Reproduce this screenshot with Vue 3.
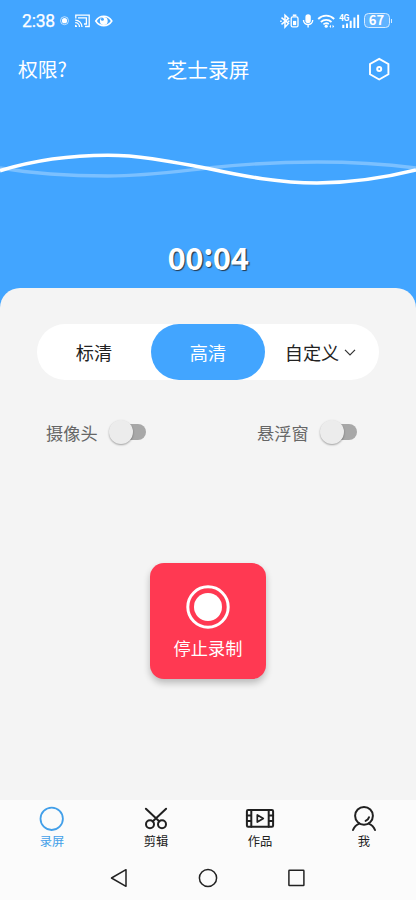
<script setup>
import { ref } from 'vue'

const qualities = ['标清', '高清', '自定义']
const quality = ref('高清')
const tab = ref('录屏')
const tabs = ['录屏', '剪辑', '作品', '我']
const switches = ref([
  { label: '摄像头', on: false },
  { label: '悬浮窗', on: false },
])
</script>

<template>
  <div class="screen">
    <div class="status">
      <span class="clock">2:38</span>
      <svg class="status-left" width="54" height="18" viewBox="0 0 54 18" fill="none" stroke="#fff">
        <circle cx="5.5" cy="8.7" r="4" stroke-width="1" opacity=".65" />
        <circle cx="5.5" cy="8.7" r="2.6" fill="#fff" stroke="none" />
        <path d="M16.8 6.5V3.2h13.4v11.3H26M19 5.8h8.4v6.2H25" stroke-width="1.3" />
        <path d="M16.2 8.1a6.8 6.8 0 0 1 6.8 6.8M16.2 10.6a4.3 4.3 0 0 1 4.3 4.3" stroke-width="1.3" />
        <path d="M16 12.7a2.2 2.2 0 0 1 2.2 2.2H16z" fill="#fff" stroke="none" />
        <path d="M36.8 9c4-6.3 12-6.3 16 0c-4 6.3-12 6.3-16 0z" stroke-width="1.6" />
        <circle cx="44.8" cy="9" r="3.9" fill="#fff" stroke="none" />
        <circle cx="43.4" cy="7.2" r="1.5" fill="#42a5ff" stroke="none" />
      </svg>
      <span class="grow"></span>
      <svg class="status-right" width="82" height="18" viewBox="0 0 82 18" fill="none" stroke="#fff" stroke-width="1.5">
        <path d="M1.5 5.6l7 5.8L5 15.2V3.2l3.5 3.2-7 6" stroke-width="1.5" />
        <path d="M.2 9.2h1.5M7.8 9.2h1.7" />
        <rect x="11.2" y="4.9" width="6.8" height="10" rx="1.5" stroke-width="1.3" />
        <path d="M12.8 3.2h3.6" />
        <rect x="13" y="8.9" width="3.2" height="4.2" fill="#fff" stroke="none" />
        <rect x="25.4" y="2.3" width="5.4" height="8.8" rx="2.7" fill="#fff" stroke="none" />
        <path d="M23.5 8c0 6 9.2 6 9.2 0M28.1 12.5v3" stroke-width="1.4" />
        <path d="M38.2 7c4.4-4.4 11.6-4.4 16 0M40.9 10c3-2.9 7.6-2.9 10.6 0M43.4 12.4c1.7-1.5 3.8-1.5 5.4-.4" stroke-width="1.8" />
        <circle cx="46.2" cy="14.2" r="1.6" fill="#fff" stroke="none" />
        <path d="M51 12.8l-1.6 1.6 1.6 1.5zM52.6 12.8l1.6 1.6-1.6 1.5z" fill="#fff" stroke="none" />
        <path d="M63.3 16v-3.2M67 16v-4.5M70.7 16V8.8M74.4 16V5.5M78.1 16V2.7" stroke-width="2" />
        <text x="59" y="9.2" class="network">4G</text>
      </svg>
      <span class="battery">67</span>
      <span class="battery-tip"></span>
    </div>

    <header class="header">
      <span>权限?</span>
      <span class="title">芝士录屏</span>
      <svg class="settings" width="22" height="24" viewBox="0 0 22 24" fill="none" stroke="#fff" stroke-width="1.9">
        <path d="M11.2 1.8l9.2 5.2v10.3l-9.2 5.2L2 17.3V7z" />
        <circle cx="11.2" cy="12" r="2" stroke-width="2" />
      </svg>
    </header>

    <svg class="wave" width="416" height="44" viewBox="0 0 416 44" fill="none">
      <path d="M0 18C35 24 73 26 108 26C145 26 180 21 208 18C245 14 280 12 317 12C352 12 384 14 416 18" stroke="#7bc0ff" stroke-width="3.4" />
      <path d="M0 20.7C35 10 73 5.3 108 5.3C145 5.3 180 13.5 208 18.5C245 26.5 280 33 317 33C352 33 388 27 416 20" stroke="#fff" stroke-width="3.6" />
    </svg>

    <div class="timer">00<span class="colon">:</span>04</div>

    <main class="panel">
      <div class="segments">
        <button v-for="q in qualities" :key="q" :class="['segment', { active: quality === q }]" @click="quality = q">
          {{ q }}
          <svg v-if="q === '自定义'" width="12" height="8" viewBox="0 0 12 8" fill="none" stroke="#333" stroke-width="1.2">
            <path d="M1 1.8l5 5.2 5-5.2" />
          </svg>
        </button>
      </div>

      <div class="switches">
        <label v-for="s in switches" :key="s.label" class="switch" @click="s.on = !s.on">
          <span>{{ s.label }}</span>
          <span :class="['track', { on: s.on }]"><span class="knob"></span></span>
        </label>
      </div>

      <button class="record">
        <svg width="44" height="44" viewBox="0 0 44 44">
          <circle cx="22" cy="22" r="20.2" fill="none" stroke="#fff" stroke-width="3" />
          <circle cx="22" cy="22" r="14" fill="#fff" />
        </svg>
        <span>停止录制</span>
      </button>
    </main>

    <nav class="tabs">
      <button v-for="t in tabs" :key="t" :class="['tab', { current: tab === t }]" @click="tab = t">
        <svg width="30" height="28" viewBox="0 0 30 28" fill="none" stroke="currentColor" stroke-width="2" stroke-linecap="round" stroke-linejoin="round">
          <circle v-if="t === '录屏'" cx="14.7" cy="13.8" r="11.2" stroke-width="1.8" />
          <template v-else-if="t === '剪辑'">
            <path d="M4.9 3.8l13.5 12.7M25.1 3.8L11.6 16.5" />
            <circle cx="9" cy="19.2" r="4" />
            <circle cx="21" cy="19.2" r="4" />
          </template>
          <template v-else-if="t === '作品'">
            <rect x="1.9" y="5" width="26.2" height="16.8" rx="1.2" />
            <path d="M6.3 5v16.8M23.7 5v16.8M1.9 10.6h4.4M1.9 16.1h4.4M23.7 10.6h4.4M23.7 16.1h4.4" />
            <path d="M12.3 9.9v7.2l6-3.6z" stroke-width="1.7" />
          </template>
          <template v-else>
            <circle cx="15" cy="10.8" r="8.9" />
            <path d="M10.3 18.6c-3 1.2-5.2 3.4-6.3 6.4M19.7 18.6c3 1.2 5.2 3.4 6.3 6.4M20 12.2c-.5 1.8-1.7 3-3.4 3.7" />
          </template>
        </svg>
        <span>{{ t }}</span>
      </button>
    </nav>

    <div class="system">
      <svg width="18" height="20" viewBox="0 0 18 20"><path d="M16 1.7v16.6L1.5 10z" /></svg>
      <svg width="20" height="20" viewBox="0 0 20 20"><circle cx="10" cy="10" r="8.6" /></svg>
      <svg width="18" height="20" viewBox="0 0 18 20"><rect x=".9" y="2.3" width="15" height="15.2" rx=".6" /></svg>
    </div>
  </div>
</template>

<style>
body {
  margin: 0;
  background: #42a5ff;
}
</style>

<style scoped>
.screen {
  display: flex;
  flex-direction: column;
  width: 416px;
  height: 900px;
  overflow: hidden;
  background: #42a5ff;
  color: #fff;
  font-family: "Noto Sans", "Noto Sans CJK SC", sans-serif;
}
button {
  padding: 0;
  border: 0;
  background: none;
  font: inherit;
  color: inherit;
}
svg {
  display: block;
  flex: none;
}
.status {
  display: flex;
  align-items: center;
  height: 41px;
  padding: 0 24px 0 22px;
  flex: none;
}
.clock {
  width: 37px;
  font: 17.5px/20px Roboto, sans-serif;
  letter-spacing: -0.2px;
  -webkit-text-stroke: 0.25px #fff;
}
.grow {
  flex: 1;
}
.status-right {
  margin-right: 1.5px;
}
.network {
  font: bold 8.5px Roboto, sans-serif;
  letter-spacing: -0.5px;
  fill: #fff;
  stroke: none;
}
.battery {
  width: 26px;
  height: 15px;
  box-sizing: border-box;
  border: 1px solid #d5ebff;
  border-radius: 4.5px;
  background: #60b3ff;
  font: bold 13px/12px "Noto Sans CJK SC", sans-serif;
  text-align: center;
}
.battery-tip {
  width: 1.5px;
  height: 4px;
  margin-left: 1px;
  background: #d5ebff;
}
.header {
  display: grid;
  grid-template-columns: 1fr auto 1fr;
  align-items: center;
  height: 56px;
  padding: 0 26px 0 18px;
  font: 19.8px/28px "Noto Sans CJK SC", sans-serif;
  flex: none;
}
.title {
  font-size: 20.7px;
  margin-left: 8px;
}
.settings {
  justify-self: end;
}
.wave {
  margin-top: 53px;
}
.timer {
  height: 94px;
  box-sizing: border-box;
  padding-top: 47px;
  font: bold 31px/32px "Noto Sans CJK SC", sans-serif;
  letter-spacing: -0.4px;
  text-align: center;
  text-shadow: 1.2px 1.2px 1px #24384b;
  flex: none;
}
.colon {
  display: inline-block;
  transform: translateY(-3px);
}
.panel {
  display: flex;
  flex-direction: column;
  align-items: center;
  height: 512px;
  box-sizing: border-box;
  padding-top: 36px;
  border-radius: 20px 20px 0 0;
  background: #f4f4f4;
  flex: none;
}
.segments {
  display: flex;
  width: 342px;
  height: 56px;
  border-radius: 28px;
  background: #fff;
  color: #222;
  font-size: 18.2px;
}
.segment {
  display: flex;
  width: 114px;
  box-sizing: border-box;
  align-items: center;
  justify-content: center;
  gap: 5px;
  padding-bottom: 1px;
  border-radius: 28px;
}
.segment:last-child {
  padding-right: 3px;
}
.segment.active {
  background: #42a5ff;
  color: #fff;
}
.switches {
  display: flex;
  width: 416px;
  box-sizing: border-box;
  padding: 0 59px 0 46px;
  justify-content: space-between;
  margin-top: 40px;
  height: 24px;
  color: #666;
  font-size: 17.2px;
}
.switch {
  display: flex;
  align-items: center;
  gap: 12.4px;
}
.track {
  display: flex;
  align-items: center;
  width: 36px;
  height: 16px;
  border-radius: 8px;
  background: #a8a8a8;
}
.track.on {
  justify-content: flex-end;
  background: #9dd0ff;
}
.knob {
  width: 24px;
  height: 24px;
  margin-left: -1px;
  border-radius: 50%;
  background: #ececec;
  box-shadow: 0 1px 2px rgba(0, 0, 0, 0.35);
  flex: none;
}
.record {
  display: flex;
  flex-direction: column;
  align-items: center;
  width: 116px;
  height: 116px;
  margin-top: 119px;
  padding-top: 22px;
  border-radius: 14px;
  background: #ff3952;
  box-shadow: 0 4px 7px rgba(0, 0, 0, 0.24);
  font-size: 17.2px;
  line-height: 24px;
}
.record span {
  margin-top: 8px;
}
.tabs {
  display: flex;
  height: 56px;
  background: #fbfbfb;
  color: #202020;
  flex: none;
}
.tab {
  display: flex;
  flex: 1;
  flex-direction: column;
  align-items: center;
  padding-top: 5px;
  font-size: 12.3px;
  line-height: 18px;
}
.tab.current {
  color: #429fe9;
}
.system {
  display: flex;
  height: 44px;
  align-items: center;
  justify-content: center;
  gap: 70px;
  background: #fbfbfb;
  flex: none;
}
.system path,
.system circle,
.system rect {
  fill: none;
  stroke: #222;
  stroke-width: 1.5;
  stroke-linejoin: round;
}
</style>
